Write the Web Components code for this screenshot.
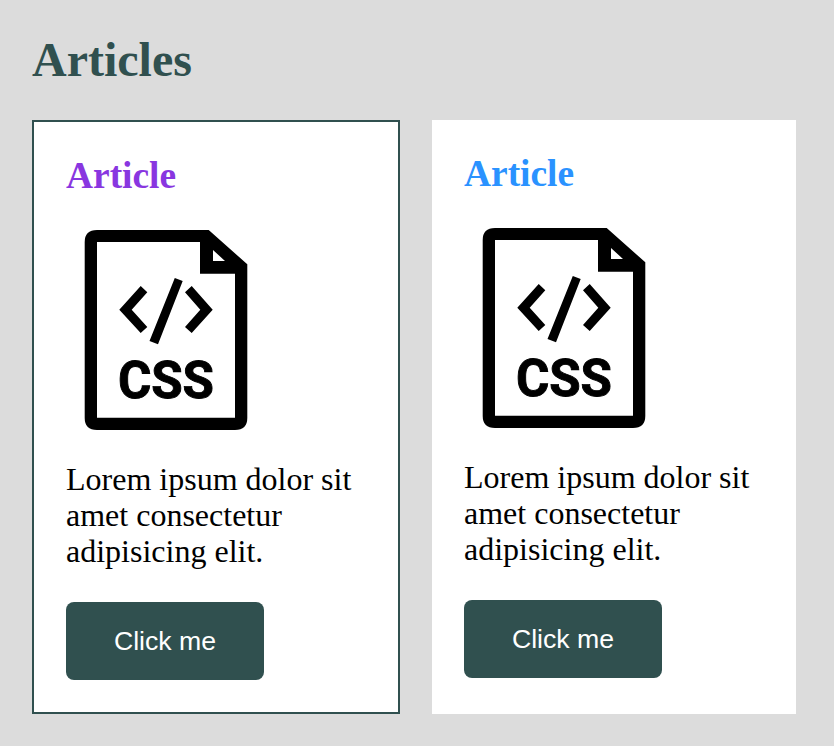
<!DOCTYPE html>
<html lang="en"><head><meta charset="utf-8"><title>Articles</title>
<style>body{margin:0;background:#dcdcdc;font-family:"Liberation Serif",serif}</style></head><body>
<articles-page>
<article-card bordered style="--title:#8936e0"><span slot="title">Article</span>Lorem ipsum dolor sit amet consectetur adipisicing elit.</article-card>
<article-card style="--title:#2a92ff"><span slot="title">Article</span>Lorem ipsum dolor sit amet consectetur adipisicing elit.</article-card>
</articles-page>
<script>
customElements.define('css-file-icon', class extends HTMLElement{
constructor(){super();this.attachShadow({mode:'open'}).innerHTML=`
<style>:host{display:block;width:200px;height:200px}svg{display:block;overflow:visible}</style>
<svg width="200" height="200" viewBox="0 0 200 200" aria-hidden="true">
<path fill-rule="evenodd" d="M31 0H142.7L181.3 34.3V188Q181.3 200 169 200H31Q18.7 200 18.7 188V12Q18.7 0 31 0ZM31 12V187.7H169V43.7H134V12ZM147 20V31H159Z"/>
<path d="M74.7 56L53.3 79.7L74.7 103L81.3 97L65.7 79.7L81.3 62.3ZM125.7 56L119 62.3L134.3 79.7L119 97L125.7 103L146.7 79.7ZM108.8 48L116.7 51L92 114.2L83.5 111Z"/>
<text x="52" y="167.8" textLength="96" lengthAdjust="spacing" font-family="Roboto,sans-serif" font-weight="700" font-size="51" stroke="#000" stroke-width=".9">CSS</text>
</svg>`}});
customElements.define('action-button', class extends HTMLElement{
constructor(){super();this.attachShadow({mode:'open'}).innerHTML=`
<style>:host{display:block;width:198px}button{display:block;width:100%;height:78px;padding:0;border:0;border-radius:8px;background:#30504f;color:#fff;font:26.67px "Liberation Sans",sans-serif}</style><button><slot></slot></button>`}});
customElements.define('article-card', class extends HTMLElement{
constructor(){super();this.attachShadow({mode:'open'}).innerHTML=`
<style>:host{display:block;box-sizing:border-box;width:364px;height:594px;padding:32px;background:#fff}
:host([bordered]){width:368px;border:2px solid #30504f}
h2{margin:0 0 32px;font-size:37.44px;line-height:44px;color:var(--title)}p{margin:31px 0 33px;font-size:32px;line-height:36px}</style>
<h2><slot name="title"></slot></h2><css-file-icon></css-file-icon><p><slot></slot></p><action-button>Click me</action-button>`}});
customElements.define('articles-page', class extends HTMLElement{
constructor(){super();this.attachShadow({mode:'open'}).innerHTML=`
<style>:host{display:block;padding:32px}h1{margin:0 0 32px;font-size:48px;line-height:56px;color:#30504f}div{display:flex;gap:32px}</style>
<h1>Articles</h1><div><slot></slot></div>`}});
</script></body></html>
